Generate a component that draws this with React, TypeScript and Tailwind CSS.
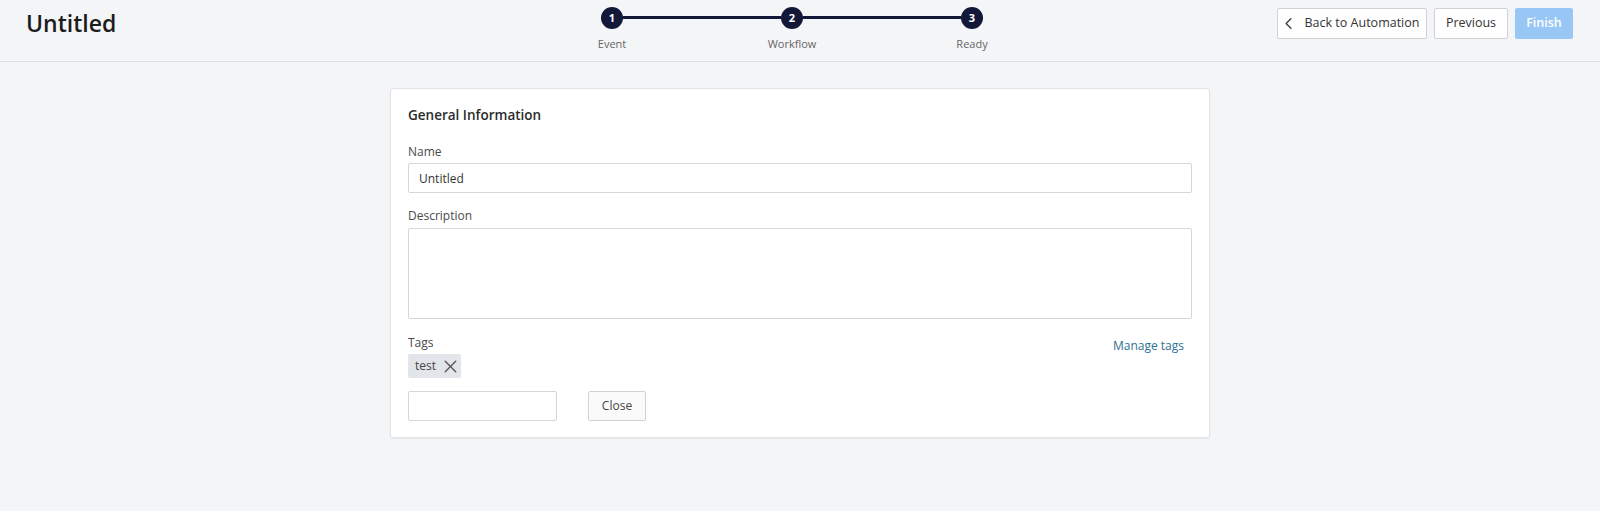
import React from 'react';
import { ChevronLeft, X } from 'lucide-react';

const steps = ['Event', 'Workflow', 'Ready'];

function Step({ n, label }: { n: number; label: string }) {
  return (
    <div className="flex w-[22px] flex-col items-center">
      <div className="flex h-[22px] w-[22px] items-center justify-center rounded-full bg-[#121838] text-[11px] font-bold text-white">
        {n}
      </div>
      <span className="mt-[8px] whitespace-nowrap text-[11px] leading-[14px] text-[#666]">{label}</span>
    </div>
  );
}

export default function App() {
  return (
    <div className="min-h-[511px] bg-[#f4f5f7] text-[#333]" style={{ fontFamily: '"Open Sans", "Noto Sans", sans-serif' }}>
      <header className="grid h-[62px] grid-cols-[1fr_auto_1fr] border-b border-[#dcdfe3] px-[26px]">
        <h1 className="pt-[9px] text-[23px] font-semibold leading-[28px] text-[#1c1c1c]">Untitled</h1>

        <div className="-ml-[16px] flex items-start pt-[7px]">
          {steps.map((s, i) => (
            <React.Fragment key={s}>
              {i > 0 && <div className="mt-[9px] h-[3px] w-[158px] bg-[#121838]" />}
              <Step n={i + 1} label={s} />
            </React.Fragment>
          ))}
        </div>

        <div className="flex items-start justify-end gap-[7px] pt-[8px] pr-[1px]">
          <button className="flex h-[31px] w-[150px] items-center justify-center gap-[7px] rounded-[2px] border border-[#cfd3d8] bg-white text-[12.5px] text-[#333]">
            <ChevronLeft size={19} strokeWidth={1.8} className="-ml-[6px] text-[#444]" />
            Back to Automation
          </button>
          <button className="flex h-[31px] w-[74px] items-center justify-center rounded-[2px] border border-[#cfd3d8] bg-white text-[12.5px] text-[#333]">
            Previous
          </button>
          <button className="flex h-[31px] w-[58px] items-center justify-center rounded-[2px] bg-[#99c7f5] text-[12.5px] font-semibold text-white">
            Finish
          </button>
        </div>
      </header>

      <main className="pt-[26px]">
        <section className="mx-auto w-[820px] rounded-[3px] border border-[#e1e4e8] bg-white px-[17px] pt-[16px] pb-[16px] shadow-[0_1px_2px_rgba(0,0,0,0.06)]">
          <h2 className="text-[13.5px] font-semibold leading-[20px] text-[#2b2b2b]">General Information</h2>

          <label className="mt-[19px] block text-[12px] leading-[16px] text-[#4a4a4a]">Name</label>
          <input
            defaultValue="Untitled"
            className="mt-[3px] block h-[30px] w-full rounded-[2px] border border-[#d3d7dc] px-[10px] text-[12px] text-[#333] outline-none"
          />

          <label className="mt-[15px] block text-[12px] leading-[16px] text-[#4a4a4a]">Description</label>
          <textarea className="mt-[4px] block h-[91px] w-full resize-none rounded-[2px] border border-[#d3d7dc] outline-none" />

          <div className="mt-[16px] flex items-start justify-between">
            <div>
              <label className="block text-[12px] leading-[16px] text-[#4a4a4a]">Tags</label>
              <div className="mt-[3px] flex h-[24px] w-[53px] items-center gap-[4px] rounded-[2px] bg-[#e2e5e9] pl-[7px] text-[12px] text-[#444]">
                test
                <X size={21} strokeWidth={1.5} className="text-[#555]" />
              </div>
            </div>
            <a className="mt-[3px] mr-[8px] text-[12px] leading-[16px] text-[#2f7191]">Manage tags</a>
          </div>

          <div className="mt-[13px] flex items-center gap-[31px]">
            <input className="h-[30px] w-[149px] rounded-[2px] border border-[#d3d7dc] outline-none" />
            <button className="h-[30px] w-[58px] rounded-[2px] border border-[#cfd3d8] bg-[#fafafa] text-[12px] text-[#444]">Close</button>
          </div>
        </section>
      </main>
    </div>
  );
}
